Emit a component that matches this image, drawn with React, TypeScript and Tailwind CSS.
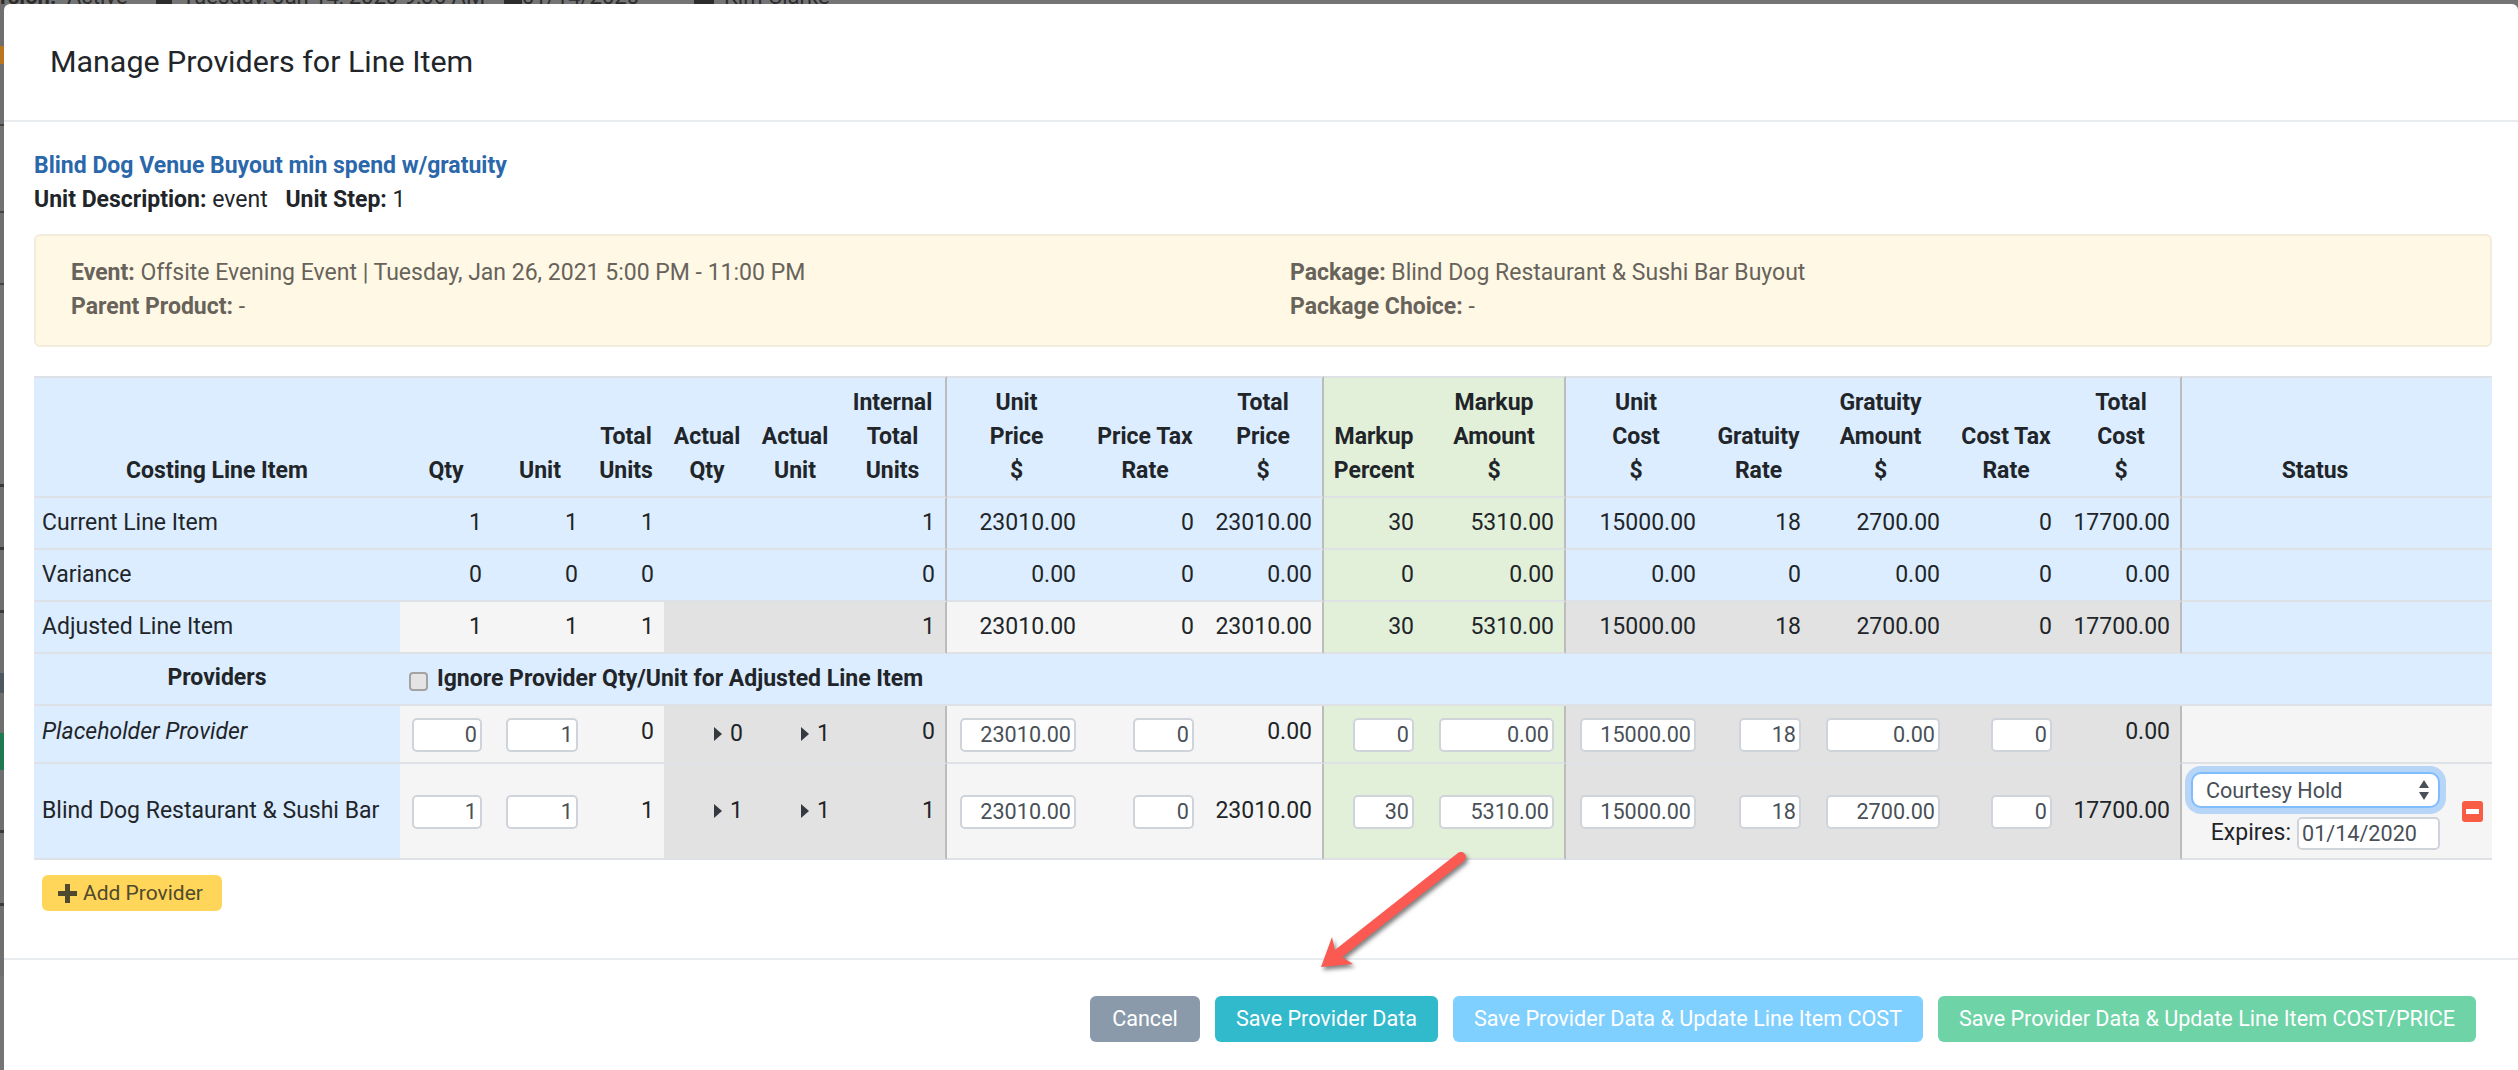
import React from "react";

const BLUE = "bg-[#dcedff]";
const GREEN = "bg-[#e2f0d9]";
const GRAY = "bg-[#e2e2e2]";
const LIGHT = "bg-[#f5f5f5]";

const widths = [366, 92, 96, 76, 86, 90, 107, 139, 118, 120, 100, 142, 140, 105, 139, 112, 120, 266, 44];
const dividers = new Set([6, 9, 11, 16]);

const headers: string[][] = [
  ["Qty"],
  ["Unit"],
  ["Total", "Units"],
  ["Actual", "Qty"],
  ["Actual", "Unit"],
  ["Internal", "Total", "Units"],
  ["Unit", "Price", "$"],
  ["Price Tax", "Rate"],
  ["Total", "Price", "$"],
  ["Markup", "Percent"],
  ["Markup", "Amount", "$"],
  ["Unit", "Cost", "$"],
  ["Gratuity", "Rate"],
  ["Gratuity", "Amount", "$"],
  ["Cost Tax", "Rate"],
  ["Total", "Cost", "$"],
  ["Status"],
];

const current = ["1", "1", "1", "", "", "1", "23010.00", "0", "23010.00", "30", "5310.00", "15000.00", "18", "2700.00", "0", "17700.00"];
const variance = ["0", "0", "0", "", "", "0", "0.00", "0", "0.00", "0", "0.00", "0.00", "0", "0.00", "0", "0.00"];

function groupBg(i: number, blue: boolean) {
  if (i >= 9 && i <= 10) return GREEN;
  if (blue) return BLUE;
  if (i <= 2) return LIGHT;
  if (i <= 5) return GRAY;
  if (i <= 8) return LIGHT;
  if (i <= 15) return GRAY;
  return LIGHT;
}

function hasDivider(i: number) {
  return dividers.has(i + 1);
}

function Cell({ i, blue, children, extra = "" }: { i: number; blue: boolean; children?: React.ReactNode; extra?: string }) {
  return (
    <td
      className={`${groupBg(i, blue)} border-b-2 border-[#dee2e6] p-0 pr-[10px] text-right align-middle ${
        hasDivider(i) ? "border-r-2 border-r-[#bcbcbc]" : ""
      } ${extra}`}
    >
      {children}
    </td>
  );
}

function Field({ value, w }: { value: string; w: string }) {
  return (
    <input
      readOnly
      value={value}
      className={`${w} h-[34px] rounded-[5px] border-2 border-[#ced4da] bg-white pr-[3px] text-right align-middle text-[21.6px] leading-[30px] text-[#495057] outline-none`}
    />
  );
}

function Caret({ value, shift }: { value: string; shift: string }) {
  return (
    <span className={`inline-flex items-center gap-[8px] ${shift}`}>
      <svg width="8" height="14" viewBox="0 0 8 14" className="block">
        <polygon points="0,0 8,7 0,14" fill="#343a40" />
      </svg>
      <span>{value}</span>
    </span>
  );
}

function SummaryRow({ label, values, blue }: { label: string; values: string[]; blue: boolean }) {
  return (
    <tr className="h-[52px]">
      <td className={`${BLUE} border-b-2 border-[#dee2e6] pl-[8px] text-left align-middle`}>{label}</td>
      {values.map((v, i) => (
        <Cell key={i} i={i} blue={blue}>
          {v}
        </Cell>
      ))}
      <td className={`${BLUE} border-b-2 border-[#dee2e6]`} />
      <td className={`${BLUE} border-b-2 border-[#dee2e6]`} />
    </tr>
  );
}

const fieldWidths = ["w-[70px]", "w-[72px]", "", "", "", "", "w-[116px]", "w-[61px]", "", "w-[61px]", "w-[115px]", "w-[116px]", "w-[62px]", "w-[114px]", "w-[61px]"];

function ProviderRow({
  name,
  italic,
  h,
  lift,
  values,
  totals,
  status,
}: {
  name: string;
  italic?: boolean;
  h: string;
  lift: string;
  values: string[];
  totals: { units: string; actualQty: string; actualUnit: string; internal: string; price: string; cost: string };
  status?: React.ReactNode;
}) {
  const render = (i: number) => {
    if (i === 2) return <span className={`block ${lift}`}>{totals.units}</span>;
    if (i === 3) return <Caret value={totals.actualQty} shift="-mr-[3px]" />;
    if (i === 4) return <Caret value={totals.actualUnit} shift="" />;
    if (i === 5) return <span className={`block ${lift}`}>{totals.internal}</span>;
    if (i === 8) return <span className={`block ${lift}`}>{totals.price}</span>;
    if (i === 15) return <span className={`block ${lift}`}>{totals.cost}</span>;
    return <Field value={values[i]} w={fieldWidths[i]} />;
  };
  return (
    <tr className={h}>
      <td className={`${BLUE} border-b-2 border-[#dee2e6] pl-[8px] text-left align-middle ${italic ? "italic" : ""}`}>
        <span className={`block ${lift}`}>{name}</span>
      </td>
      {current.map((_, i) => (
        <Cell key={i} i={i} blue={false}>
          {render(i)}
        </Cell>
      ))}
      {status ?? (
        <>
          <td className={`${LIGHT} border-b-2 border-[#dee2e6]`} />
          <td className={`${LIGHT} border-b-2 border-[#dee2e6]`} />
        </>
      )}
    </tr>
  );
}

function TopStrip() {
  return (
    <div className="flex h-[4px] shrink-0 overflow-hidden whitespace-nowrap bg-[#747474] text-[22px] leading-[24px] text-[#2c2c2c]">
      <div className="-mt-[15px] flex">
        <span className="w-[67px] font-bold">rsion:</span>
        <span className="w-[89px]">Active</span>
        <span className="mt-[2px] h-[22px] w-[16px] bg-[#2c2c2c]" />
        <span className="ml-[10px] w-[322px]">Tuesday, Jan 14, 2020 9:36 AM</span>
        <span className="mt-[2px] h-[22px] w-[18px] bg-[#2c2c2c]" />
        <span className="w-[172px]">01/14/2020</span>
        <span className="mt-[2px] h-[22px] w-[20px] bg-[#2c2c2c]" />
        <span className="ml-[10px]">Kim Clarke</span>
      </div>
    </div>
  );
}

const stripSegments: [string, string][] = [
  ["h-[42px]", "bg-[#6f6f6f]"],
  ["h-[18px]", "bg-[#b9761f]"],
  ["h-[60px]", "bg-[#6f6f6f]"],
  ["h-[2px]", "bg-[#444444]"],
  ["h-[85px]", "bg-[#727272]"],
  ["h-[2px]", "bg-[#444444]"],
  ["h-[70px]", "bg-[#6f6f6f]"],
  ["h-[2px]", "bg-[#444444]"],
  ["h-[199px]", "bg-[#727272]"],
  ["h-[3px]", "bg-[#3a3a3a]"],
  ["h-[60px]", "bg-[#6f6f6f]"],
  ["h-[3px]", "bg-[#3a3a3a]"],
  ["h-[60px]", "bg-[#6f6f6f]"],
  ["h-[3px]", "bg-[#3a3a3a]"],
  ["h-[60px]", "bg-[#6f6f6f]"],
  ["h-[20px]", "bg-[#4e5660]"],
  ["h-[40px]", "bg-[#6f6f6f]"],
  ["h-[37px]", "bg-[#1f7a52]"],
  ["h-[60px]", "bg-[#6f6f6f]"],
  ["h-[3px]", "bg-[#3a3a3a]"],
  ["h-[70px]", "bg-[#727272]"],
  ["h-[3px]", "bg-[#3a3a3a]"],
  ["h-[70px]", "bg-[#6f6f6f]"],
];

function Arrow() {
  return (
    <svg
      className="pointer-events-none absolute left-[1300px] top-[840px] drop-shadow-[2px_3px_2px_rgba(0,0,0,0.5)]"
      width="180"
      height="140"
      viewBox="0 0 180 140"
    >
      <line x1="161" y1="17" x2="38" y2="114" stroke="#fa5a52" strokeWidth="10" strokeLinecap="round" />
      <polygon points="21,127 32,97 35,110 42,117 53,124" fill="#fa5a52" />
    </svg>
  );
}

export default function App() {
  return (
    <div className="relative flex h-[1070px] w-[2518px] flex-col overflow-hidden bg-[#747474] font-[Roboto,sans-serif] text-[23px] leading-[33.6px] text-[#212529]">
      <TopStrip />
      <div className="flex min-h-0 flex-1">
        <div className="flex w-[4px] shrink-0 flex-col">
          {stripSegments.map(([h, c], i) => (
            <div key={i} className={`${h} ${c} shrink-0`} />
          ))}
        </div>
        <div className="flex min-w-0 flex-1 flex-col rounded-t-[6px] bg-white">
          <div className="flex h-[118px] shrink-0 items-center border-b-2 border-[#e9ecef] pl-[46px] text-[30.4px] leading-[48px]">
            Manage Providers for Line Item
          </div>
          <div className="flex-1 pl-[30px] pr-[26px] pt-[27px]">
            <div className="font-bold text-[#2a67ab]">Blind Dog Venue Buyout min spend w/gratuity</div>
            <div>
              <b className="font-bold">Unit Description:</b> event <b className="ml-[12px] font-bold">Unit Step:</b> 1
            </div>
            <div className="mt-[18px] grid h-[113px] grid-cols-[1219px_1fr] rounded-[6px] border-2 border-[#f3ecda] bg-[#fff8e5] pl-[35px] pt-[20px] text-[#67635b]">
              <div>
                <div>
                  <b>Event:</b> Offsite Evening Event | Tuesday, Jan 26, 2021 5:00 PM - 11:00 PM
                </div>
                <div>
                  <b>Parent Product:</b> -
                </div>
              </div>
              <div>
                <div>
                  <b>Package:</b> Blind Dog Restaurant &amp; Sushi Bar Buyout
                </div>
                <div>
                  <b>Package Choice:</b> -
                </div>
              </div>
            </div>

            <table className="mt-[29px] w-[2458px] table-fixed border-separate border-spacing-0">
              <colgroup>
                {widths.map((w, i) => (
                  <col key={i} style={{ width: w }} />
                ))}
              </colgroup>
              <thead>
                <tr className="h-[122px]">
                  <th className={`${BLUE} border-y-2 border-[#dee2e6] pb-[9px] align-bottom font-bold`}>Costing Line Item</th>
                  {headers.map((lines, i) => (
                    <th
                      key={i}
                      className={`${groupBg(i, true)} border-y-2 border-[#dee2e6] pb-[9px] text-center align-bottom font-bold ${
                        hasDivider(i) ? "border-r-2 border-r-[#bcbcbc]" : ""
                      }`}
                    >
                      {lines.map((l) => (
                        <div key={l}>{l}</div>
                      ))}
                    </th>
                  ))}
                  <th className={`${BLUE} border-y-2 border-[#dee2e6]`} />
                </tr>
              </thead>
              <tbody>
                <SummaryRow label="Current Line Item" values={current} blue />
                <SummaryRow label="Variance" values={variance} blue />
                <SummaryRow label="Adjusted Line Item" values={current} blue={false} />
                <tr className="h-[52px]">
                  <td className={`${BLUE} border-b-2 border-[#dee2e6] pb-[2px] text-center align-middle font-bold`}>Providers</td>
                  <td colSpan={18} className={`${BLUE} border-b-2 border-[#dee2e6] pl-[9px] align-middle font-bold`}>
                    <label className="flex items-center gap-[9px]">
                      <input
                        type="checkbox"
                        readOnly
                        className="mt-[5px] h-[19px] w-[19px] appearance-none rounded-[4px] border-2 border-[#a3a3a3] bg-[#e4e4e4]"
                      />
                      <span>Ignore Provider Qty/Unit for Adjusted Line Item</span>
                    </label>
                  </td>
                </tr>
                <ProviderRow
                  name="Placeholder Provider"
                  italic
                  h="h-[58px]"
                  lift="pb-[5px]"
                  values={["0", "1", "", "", "", "", "23010.00", "0", "", "0", "0.00", "15000.00", "18", "0.00", "0"]}
                  totals={{ units: "0", actualQty: "0", actualUnit: "1", internal: "0", price: "0.00", cost: "0.00" }}
                />
                <ProviderRow
                  name="Blind Dog Restaurant & Sushi Bar"
                  h="h-[96px]"
                  lift=""
                  values={["1", "1", "", "", "", "", "23010.00", "0", "", "30", "5310.00", "15000.00", "18", "2700.00", "0"]}
                  totals={{ units: "1", actualQty: "1", actualUnit: "1", internal: "1", price: "23010.00", cost: "17700.00" }}
                  status={
                    <>
                      <td className={`${LIGHT} border-b-2 border-[#dee2e6] pl-[9px] pr-[8px] align-middle`}>
                        <div className="flex h-[36px] items-center justify-between rounded-[10px] border-2 border-[#80bdff] bg-white pl-[13px] pr-[8px] text-[21.6px] text-[#495057] shadow-[0_0_0_6px_rgba(0,123,255,0.25)]">
                          <span>Courtesy Hold</span>
                          <svg width="12" height="20" viewBox="0 0 12 20" className="block">
                            <polygon points="6,0 11,8 1,8" fill="#495057" />
                            <polygon points="1,12 11,12 6,20" fill="#495057" />
                          </svg>
                        </div>
                        <div className="mt-[8px] flex items-center justify-end gap-[6px]">
                          <span>Expires:</span>
                          <input
                            readOnly
                            value="01/14/2020"
                            className="h-[33px] w-[143px] rounded-[5px] border-2 border-[#ced4da] bg-white pl-[3px] text-[21.6px] leading-[29px] text-[#495057] outline-none"
                          />
                        </div>
                      </td>
                      <td className={`${LIGHT} border-b-2 border-[#dee2e6] align-middle`}>
                        <div className="ml-[14px] flex h-[21px] w-[21px] items-center justify-center rounded-[3px] bg-[#f95c44]">
                          <span className="h-[5px] w-[13px] bg-white" />
                        </div>
                      </td>
                    </>
                  }
                />
              </tbody>
            </table>

            <button className="ml-[8px] mt-[15px] flex h-[36px] w-[180px] items-center gap-[6px] rounded-[6px] bg-[#ffd659] pl-[16px] text-[21px] leading-[30px] text-[#4f4a2e]">
              <svg width="19" height="19" viewBox="0 0 19 19" className="block">
                <path d="M7 0h5v7h7v5h-7v7H7v-7H0V7h7z" fill="#4f4a2e" />
              </svg>
              Add Provider
            </button>
          </div>
          <div className="flex h-[112px] shrink-0 items-start justify-end gap-[15px] border-t-2 border-[#e9ecef] pr-[42px] pt-[36px] text-[21.6px] text-white">
            <button className="h-[46px] w-[110px] rounded-[6px] bg-[#8a9aab]">Cancel</button>
            <button className="h-[46px] w-[223px] rounded-[6px] bg-[#31b9cc]">Save Provider Data</button>
            <button className="h-[46px] w-[470px] rounded-[6px] bg-[#7fcfff]">Save Provider Data &amp; Update Line Item COST</button>
            <button className="h-[46px] w-[538px] rounded-[6px] bg-[#6ed3a7]">Save Provider Data &amp; Update Line Item COST/PRICE</button>
          </div>
        </div>
      </div>
      <Arrow />
    </div>
  );
}
